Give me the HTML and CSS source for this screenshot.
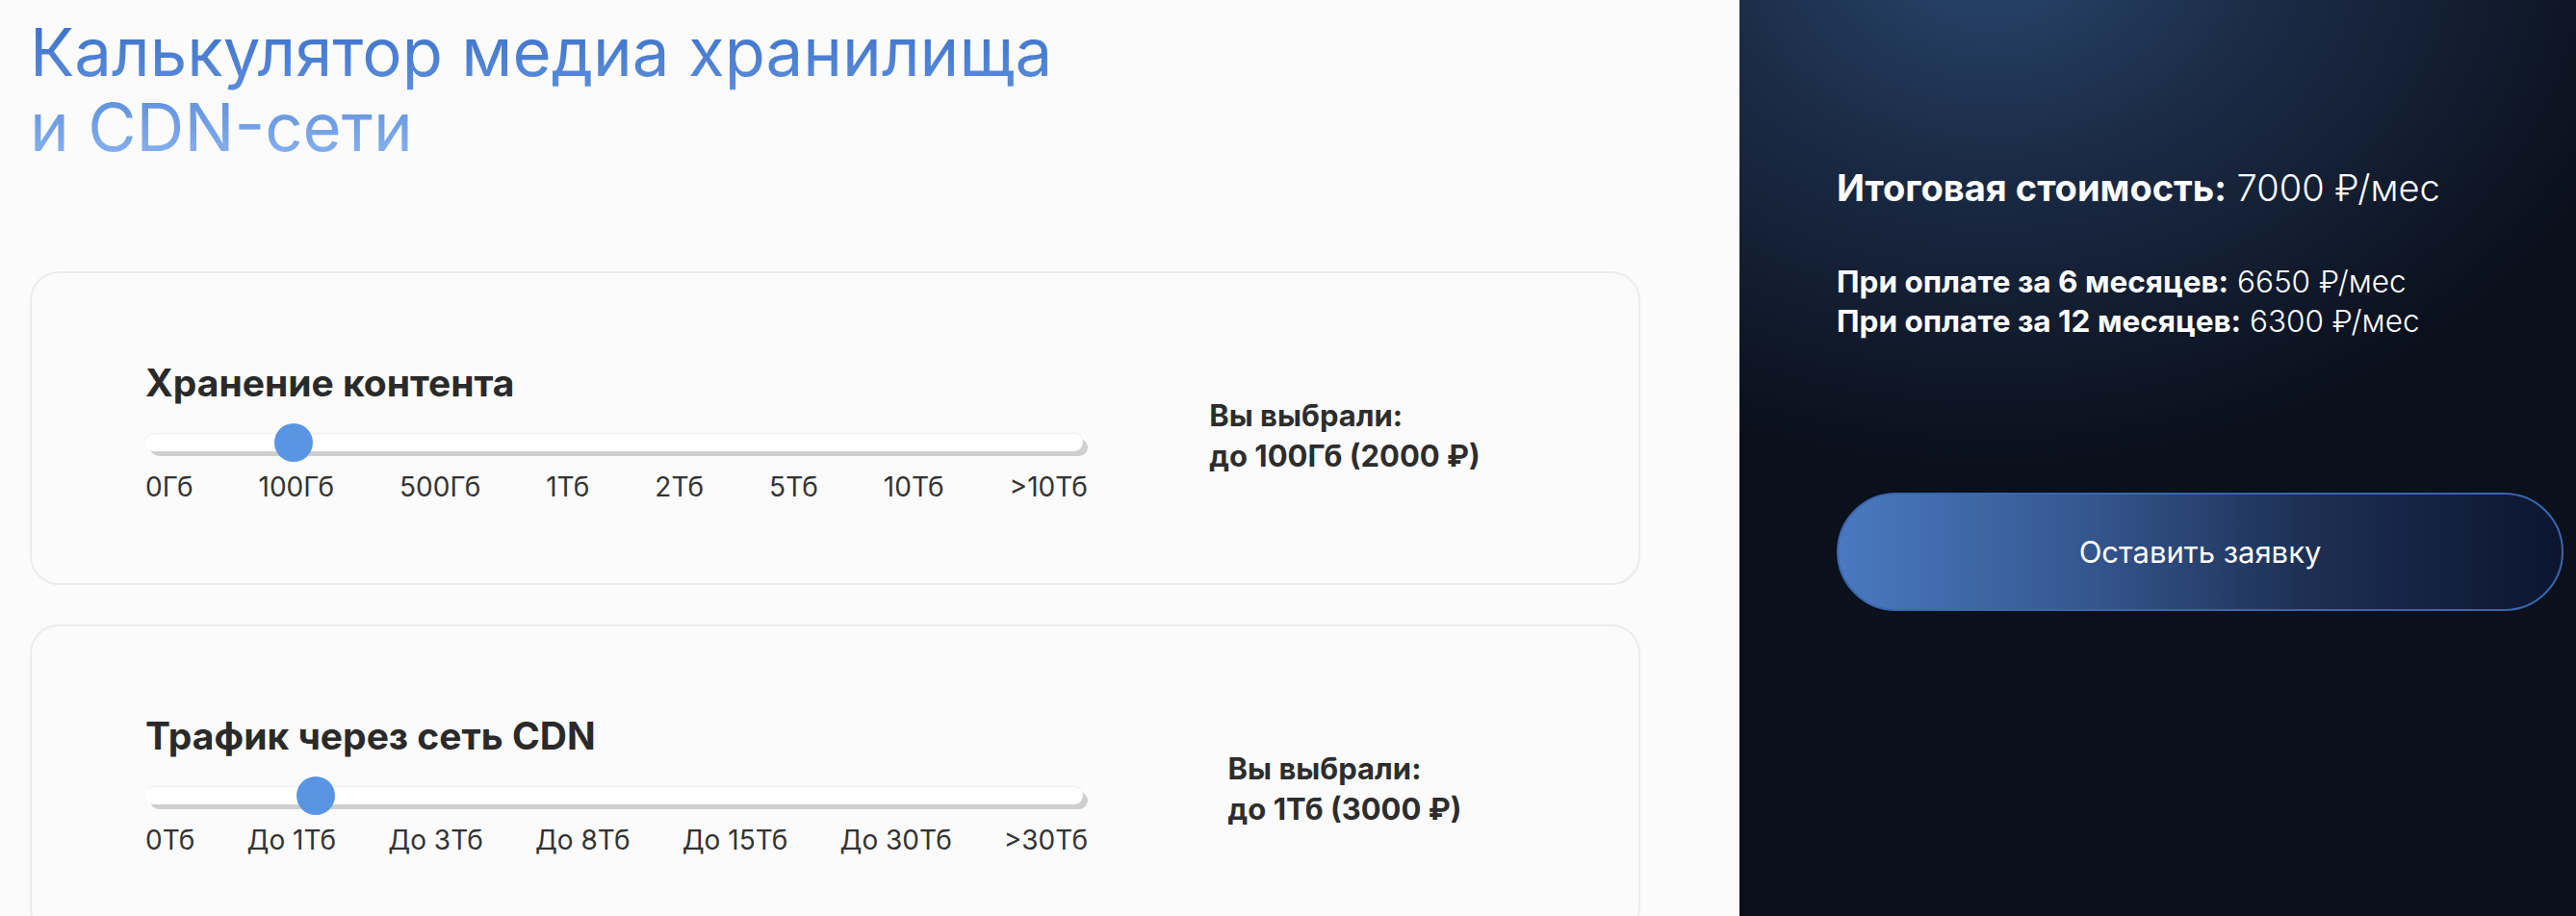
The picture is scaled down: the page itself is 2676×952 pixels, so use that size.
FILE: index.html
```html
<!DOCTYPE html>
<html lang="ru">
<head>
    <meta charset="UTF-8">
    <meta name="viewport" content="width=device-width, initial-scale=1.0">
    <title>Калькулятор медиа хранилища</title>
    <link rel="stylesheet" href="styles.css">
</head>
<body>
    <div class="page">
        <main class="calc">
            <h1 class="calc-title">Калькулятор медиа хранилища<br>и CDN-сети</h1>

            <section class="card">
                <div class="card-left">
                    <h2 class="card-title">Хранение контента</h2>
                    <div class="slider">
                        <div class="track"></div>
                        <div class="thumb" style="left: 15.7%"></div>
                    </div>
                    <div class="ticks">
                        <span>0Гб</span>
                        <span>100Гб</span>
                        <span>500Гб</span>
                        <span>1Тб</span>
                        <span>2Тб</span>
                        <span>5Тб</span>
                        <span>10Тб</span>
                        <span>&gt;10Тб</span>
                    </div>
                </div>
                <div class="card-right">
                    <div class="picked">
                        <div>Вы выбрали:</div>
                        <div>до 100Гб (2000 ₽)</div>
                    </div>
                </div>
            </section>

            <section class="card">
                <div class="card-left">
                    <h2 class="card-title">Трафик через сеть CDN</h2>
                    <div class="slider">
                        <div class="track"></div>
                        <div class="thumb" style="left: 18.1%"></div>
                    </div>
                    <div class="ticks">
                        <span>0Тб</span>
                        <span>До 1Тб</span>
                        <span>До 3Тб</span>
                        <span>До 8Тб</span>
                        <span>До 15Тб</span>
                        <span>До 30Тб</span>
                        <span>&gt;30Тб</span>
                    </div>
                </div>
                <div class="card-right">
                    <div class="picked">
                        <div>Вы выбрали:</div>
                        <div>до 1Тб (3000 ₽)</div>
                    </div>
                </div>
            </section>
        </main>

        <aside class="total">
            <p class="total-main"><b>Итоговая стоимость:</b> 7000 ₽/мес</p>
            <div class="total-periods">
                <p><b>При оплате за 6 месяцев:</b> 6650 ₽/мес</p>
                <p><b>При оплате за 12 месяцев:</b> 6300 ₽/мес</p>
            </div>
            <button class="order-btn">Оставить заявку</button>
        </aside>
    </div>
</body>
</html>
```

FILE: styles.css
```css
* {
    box-sizing: border-box;
}
html, body {
    margin: 0;
    height: 100%;
    overflow: hidden;
}
body {
    background-color: #fbfbfb;
    color: #2b2b2b;
    font-family: Inter, "Noto Sans", sans-serif;
}
.page {
    display: flex;
    height: 100%;
}
.calc {
    width: 1807px;
    padding: 15px 103px 0 31px;
}
.calc-title {
    margin: 0 0 111px;
    font-size: 69px;
    line-height: 78px;
    font-weight: 400;
    display: inline-block;
    background: linear-gradient(180deg, #3a6ec8 0%, #5a8ddb 50%, #8cb5f1 100%);
    -webkit-background-clip: text;
    background-clip: text;
    color: transparent;
}
.card {
    display: flex;
    align-items: flex-start;
    height: 326px;
    margin-bottom: 41px;
    padding: 0 38px 0 118px;
    border: 2px solid #ececec;
    border-radius: 30px;
}
.card-left {
    width: 979px;
    padding-top: 91px;
}
.card-title {
    margin: 0 0 19px;
    font-size: 39px;
    line-height: 46px;
    font-weight: 700;
    color: #2a2a2a;
}
.slider {
    position: relative;
    height: 40px;
}
.track {
    position: absolute;
    left: 0;
    right: 5px;
    top: 11px;
    height: 18px;
    background: #fff;
    border-radius: 9px;
    box-shadow: 0 -1px 2px rgba(0, 0, 0, 0.06), 5px 5px 0 #cfcfcf;
}
.thumb {
    position: absolute;
    top: 0;
    width: 40px;
    height: 40px;
    margin-left: -20px;
    border-radius: 50%;
    background: #5a95e3;
}
.ticks {
    display: flex;
    justify-content: space-between;
    margin-top: 9px;
    font-size: 28px;
    line-height: 34px;
    color: #333;
}
.card-right {
    flex: 1;
    display: flex;
    justify-content: center;
    padding-top: 127px;
}
.picked {
    font-size: 31px;
    line-height: 42px;
    font-weight: 700;
    color: #2d2d2d;
}
.total {
    flex: 1;
    padding: 170px 13px 0 101px;
    background: radial-gradient(ellipse 700px 540px at 30% -6%, #29476f 0%, #1b2b46 42%, #0a101c 100%), #0a0f1b;
    background-color: #0a0f1b;
    color: #fff;
}
.total p {
    margin: 0;
}
.total b {
    font-weight: 700;
}
.total-main {
    font-size: 38px;
    line-height: 50px;
    font-weight: 300;
}
.total-periods {
    margin-top: 52px;
    font-size: 31.5px;
    line-height: 41px;
    font-weight: 300;
}
.order-btn {
    display: block;
    width: 100%;
    height: 123px;
    margin-top: 158px;
    border: 2px solid #3a66ad;
    border-radius: 62px;
    background: linear-gradient(90deg, #4a79c1 0%, #34568e 35%, #1d2f52 65%, #0b1530 100%);
    color: #fff;
    font-family: Inter, "Noto Sans", sans-serif;
    font-size: 31px;
    font-weight: 400;
}
```
